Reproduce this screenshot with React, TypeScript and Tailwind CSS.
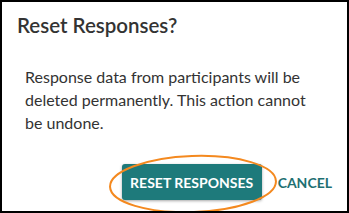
export default function App() {
  return (
    <div className="relative w-[349px] h-[213px] overflow-hidden border-2 border-black bg-white font-['Lato',sans-serif] text-[#333]">
      <h2 className="pl-[15px] pt-[9px] text-[20.5px] leading-[28px] font-semibold">Reset Responses?</h2>
      <p className="mt-[26px] pl-[23px] pr-[24px] text-[16px] leading-[23px]">
        Response data from participants will be deleted permanently. This action cannot be undone.
      </p>
      <div className="mt-[30px] flex items-center justify-end gap-[16px] pr-[15px]">
        <button className="h-[36px] w-[140px] rounded-[3px] bg-[#1e7a7b] text-[14px] font-bold text-white shadow-[0_1px_3px_rgba(0,0,0,0.35)]">
          RESET RESPONSES
        </button>
        <button className="text-[14px] font-bold text-[#1e7072]">CANCEL</button>
      </div>
      <svg className="absolute left-[103px] top-[151px]" width="176" height="64" viewBox="0 0 176 64">
        <ellipse cx="88" cy="31" rx="83" ry="28" fill="none" stroke="#f4891f" strokeWidth="2" transform="rotate(-2 88 31)" />
      </svg>
    </div>
  )
}
